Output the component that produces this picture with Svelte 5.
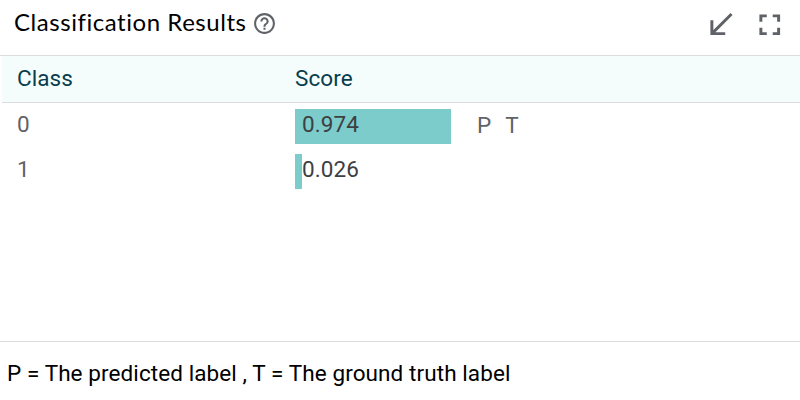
<script>
  const rows = [
    { label: '0', score: 0.974, tags: ['P', 'T'] },
    { label: '1', score: 0.026, tags: [] }
  ];
  const barWidth = (score) => Math.max(7, Math.round(score * 160));
</script>

<section class="module">
  <header>
    <h1>Classification Results</h1>
    <svg class="help" viewBox="0 0 24 24"><path d="M11 18h2v-2h-2v2zm1-16C6.48 2 2 6.48 2 12s4.480 10 10 10 10-4.480 10-10S17.520 2 12 2zm0 18c-4.410 0-8-3.590-8-8s3.590-8 8-8 8 3.590 8 8-3.590 8-8 8zm0-14c-2.210 0-4 1.790-4 4h2c0-1.100.9-2 2-2s2 .9 2 2c0 2-3 1.750-3 5h2c0-2.250 3-2.500 3-5 0-2.210-1.790-4-4-4z" /></svg>
    <div class="actions">
      <svg viewBox="0 0 24 24"><path d="M20 5.410L18.590 4 7 15.590V9H5v10h10v-2H8.410z" /></svg>
      <svg viewBox="0 0 24 24"><path d="M7 14H5v5h5v-2H7v-3zm-2-4h2V7h3V5H5v5zm12 7h-3v2h5v-5h-2v3zM14 5v2h3v3h2V5h-5z" /></svg>
    </div>
  </header>

  <div class="table">
    <div class="row head"><span class="class">Class</span><span>Score</span></div>
    {#each rows as row}
      <div class="row">
        <span class="class">{row.label}</span>
        <div class="score">
          <div class="bar" style="width: {barWidth(row.score)}px"></div>
          <span class="value">{row.score.toFixed(3)}</span>
        </div>
        <div class="tags">
          {#each row.tags as tag}<span>{tag}</span>{/each}
        </div>
      </div>
    {/each}
  </div>

  <footer>P = The predicted label , T = The ground truth label</footer>
</section>

<style>
  .module {
    box-sizing: border-box;
    width: 800px;
    height: 400px;
    display: flex;
    flex-direction: column;
    background: #fff;
    color: #000;
    font-family: Roboto, "Liberation Sans", sans-serif;
    font-size: 22.5px;
    letter-spacing: 0.09px;
    overflow: hidden;
  }
  header {
    box-sizing: border-box;
    height: 56px;
    flex: none;
    display: flex;
    align-items: flex-start;
    padding-left: 14px;
    border-bottom: 1px solid #dadce0;
  }
  h1 {
    margin: 0;
    width: 237.5px;
    font: 400 24px/44px Lato, sans-serif;
    letter-spacing: 0.55px;
    white-space: nowrap;
  }
  svg { fill: #5f6368; flex: none; }
  .help { width: 25px; height: 25px; margin-top: 11px; }
  .actions {
    display: flex;
    gap: 13px;
    margin: 6.5px 13px 0 auto;
  }
  .actions svg { width: 35.5px; height: 35.5px; }
  .table { flex: 1; }
  .row {
    box-sizing: border-box;
    height: 45px;
    display: flex;
    color: #5f6368;
    line-height: 42px;
  }
  .row.head {
    height: 47px;
    margin-left: 2px;
    border-bottom: 1px solid #dadce0;
    background: #f4fdfc;
    color: #083d4d;
    line-height: 44px;
  }
  .class {
    box-sizing: border-box;
    width: 295px;
    flex: none;
    padding-left: 17px;
  }
  .head .class { padding-left: 15px; width: 293px; }
  .score {
    display: grid;
    width: 182px;
    align-items: center;
  }
  .bar, .value { grid-area: 1 / 1; }
  .bar { height: 35px; margin-top: 2px; background: #7ccccc; }
  .value { align-self: start; padding-left: 7px; color: #3c4043; }
  .tags { display: flex; gap: 14px; line-height: 44px; }
  footer {
    box-sizing: border-box;
    height: 59px;
    flex: none;
    border-top: 1px solid #dadce0;
    padding-left: 7px;
    line-height: 63px;
    white-space: nowrap;
  }
</style>
